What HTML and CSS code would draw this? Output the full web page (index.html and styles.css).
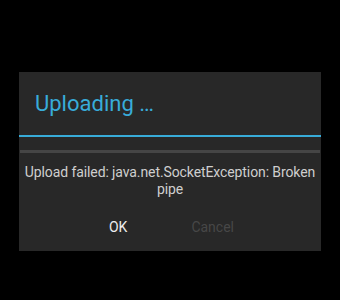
FILE: index.html
```
<!DOCTYPE html>
<html>
<head>
<meta charset="utf-8">
<link rel="stylesheet" href="styles.css">
</head>
<body>
<div class="dialog">
  <div class="title">Uploading …</div>
  <div class="title-rule"></div>
  <div class="progress"></div>
  <div class="message">Upload failed: java.net.SocketException: Broken pipe</div>
  <div class="buttons">
    <span class="btn ok">OK</span>
    <span class="btn cancel">Cancel</span>
  </div>
</div>
</body>
</html>
```
FILE: styles.css
```
html, body {
  margin: 0;
  padding: 0;
  background: #000;
  width: 340px;
  height: 300px;
  overflow: hidden;
}
body {
  font-family: Roboto, "Noto Sans", sans-serif;
}
.dialog {
  margin: 72px 0 0 19px;
  width: 302px;
  height: 179px;
  background: #282828;
  display: flex;
  flex-direction: column;
}
.title {
  padding: 19px 0 18px 16px;
  font-size: 22px;
  line-height: 26px;
  color: #38acd9;
}
.title-rule {
  height: 2px;
  background: #38acd9;
}
.progress {
  height: 3px;
  margin: 13px 1px 0;
  background: #454545;
}
.message {
  margin-top: 11px;
  padding: 0;
  font-size: 14px;
  line-height: 17px;
  letter-spacing: -0.1px;
  text-align: center;
  color: #cfcfcf;
}
.buttons {
  margin-top: 21px;
  padding-left: 3px;
  display: flex;
  justify-content: center;
  gap: 64px;
  font-size: 14px;
  line-height: 17px;
}
.ok {
  color: #ededed;
}
.cancel {
  color: #474747;
}
```
